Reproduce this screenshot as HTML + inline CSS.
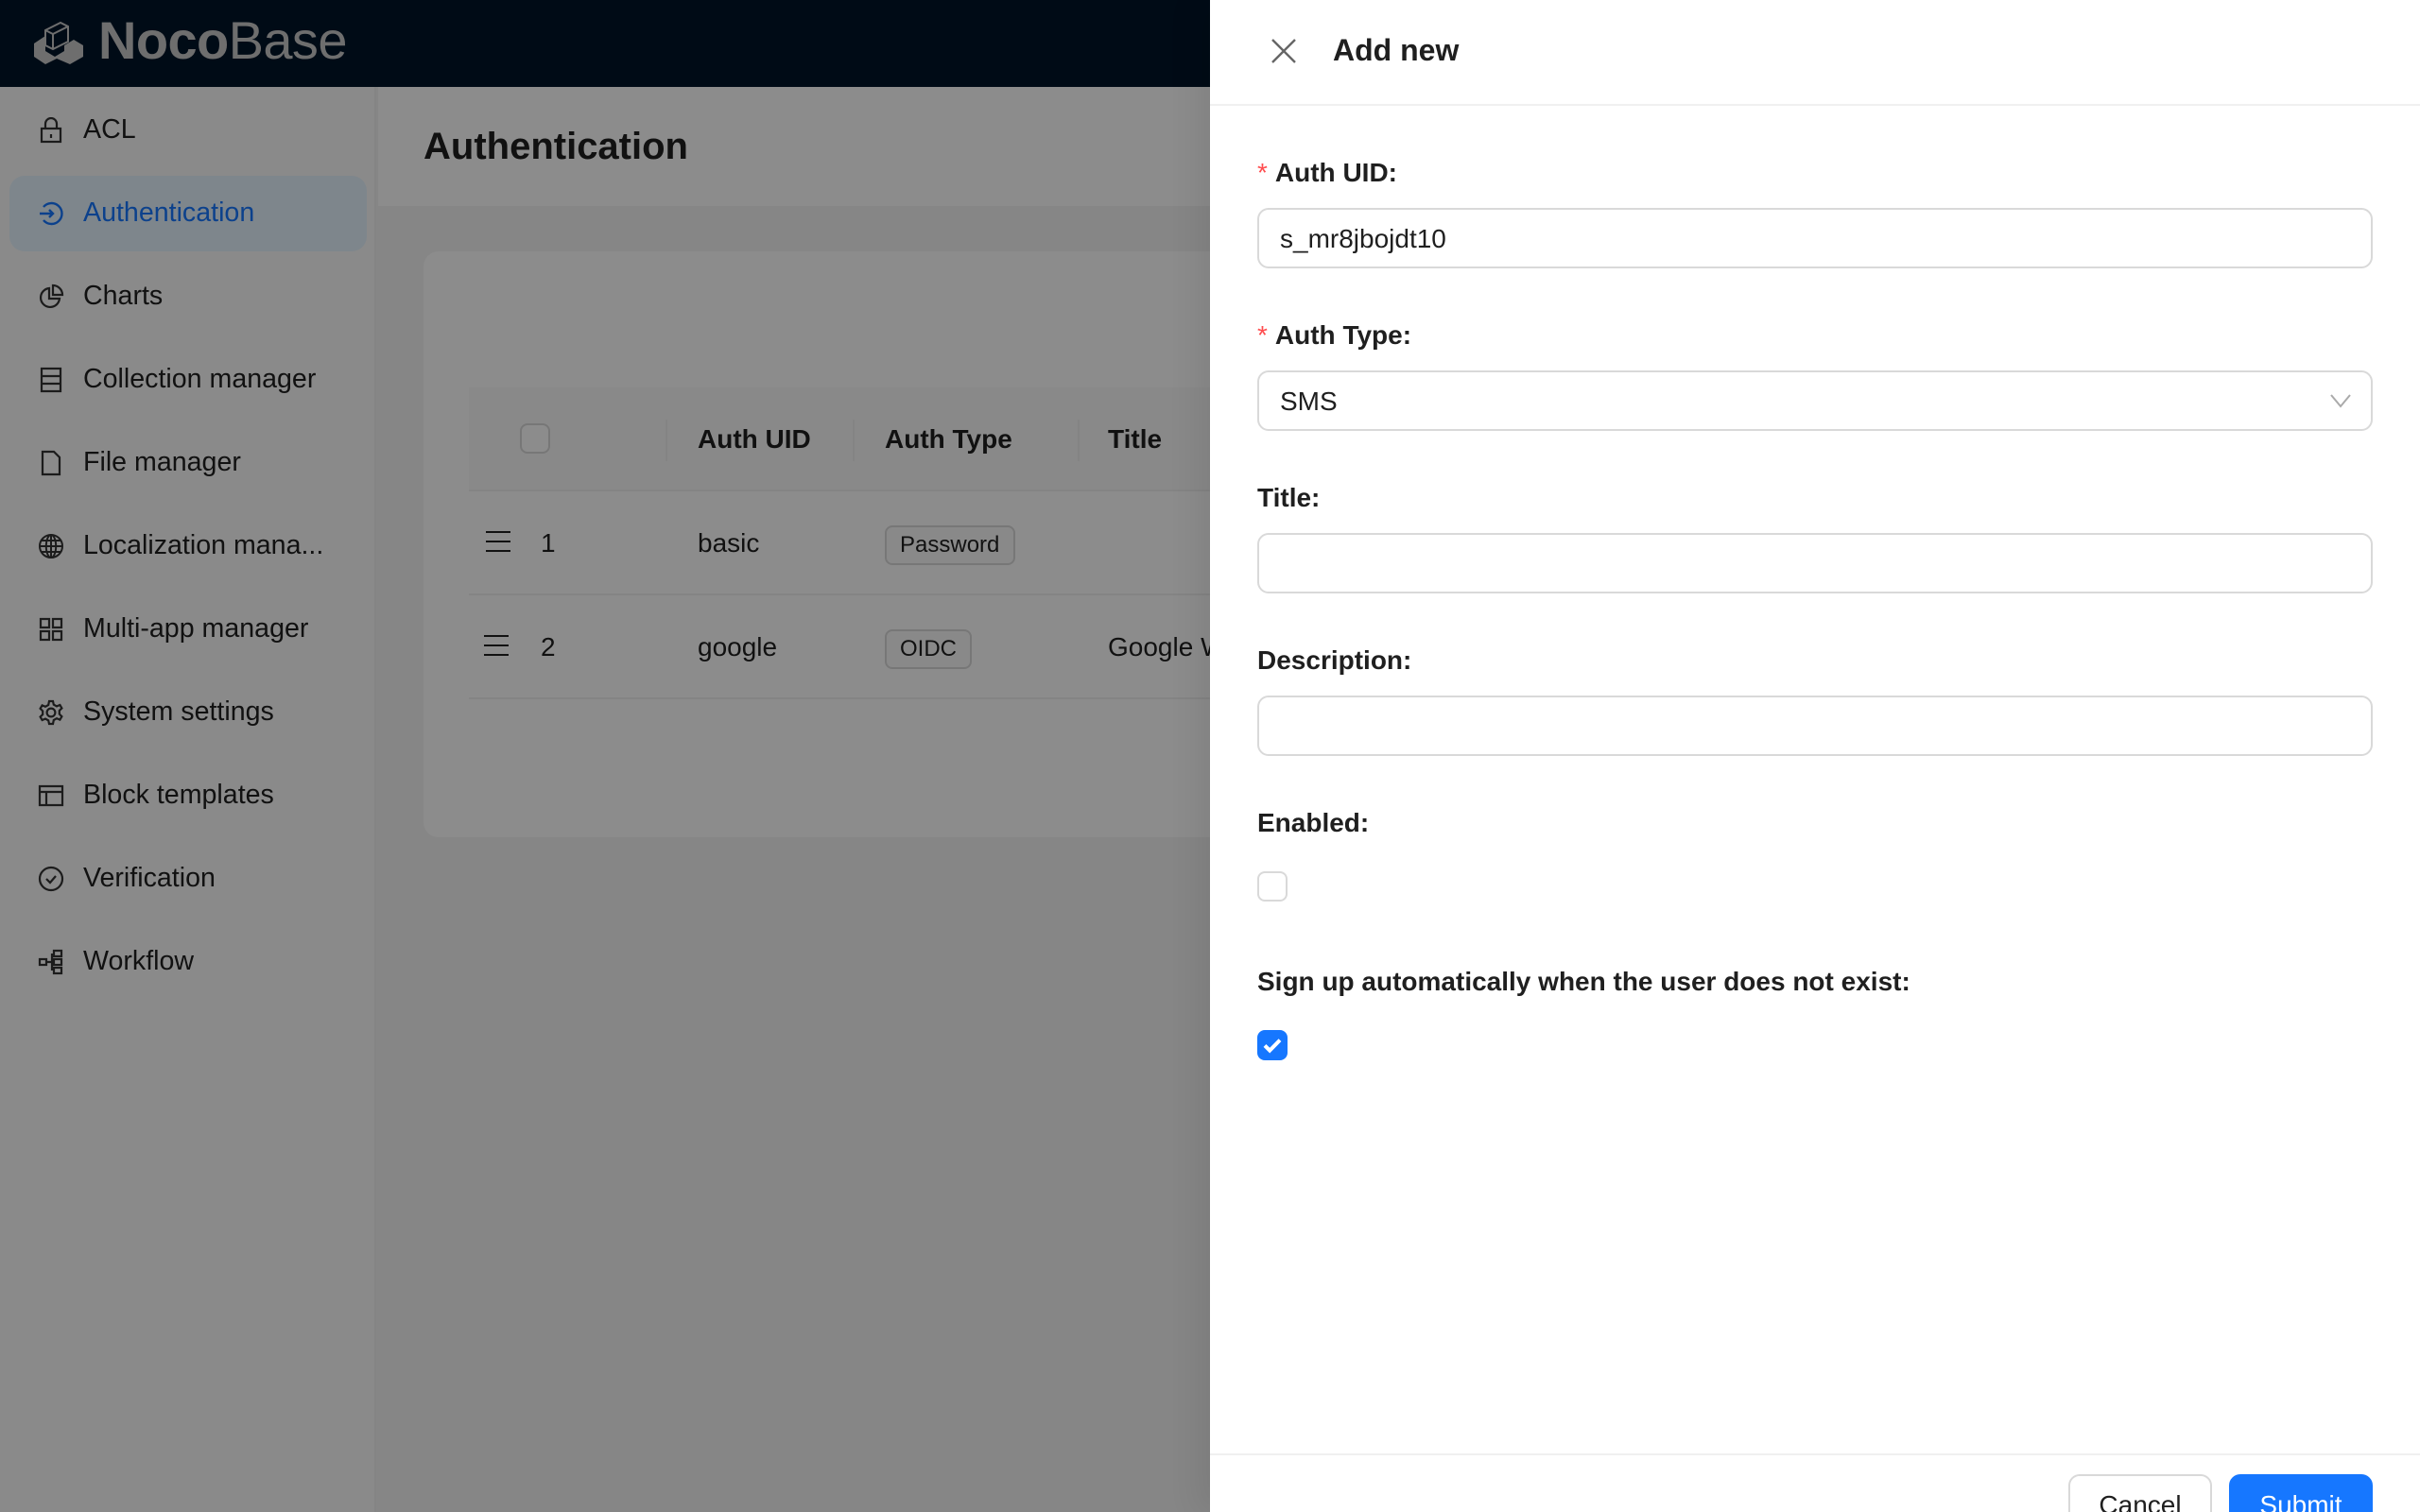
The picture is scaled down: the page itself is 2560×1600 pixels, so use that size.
<!DOCTYPE html>
<html><head><meta charset="utf-8">
<style>
*{box-sizing:border-box;margin:0;padding:0}
html,body{width:2560px;height:1600px;overflow:hidden;background:#f5f5f5}
#w{width:1280px;height:800px;transform:scale(2);transform-origin:0 0;position:relative;font-family:"Liberation Sans",Arial,sans-serif;font-size:14px;color:rgba(0,0,0,0.88);background:#f5f5f5;overflow:hidden}
.abs{position:absolute}
.hdr{left:0;top:0;width:1280px;height:46px;background:#001529}
.side{left:0;top:46px;width:199px;height:754px;background:#fbfbfb;border-right:1px solid #f0f0f0}
.mi{position:absolute;left:5px;width:189px;height:40px;border-radius:8px;display:flex;align-items:center;padding-left:15px;font-size:14.3px}
.mi svg{width:14px;height:14px;margin-right:10px;flex:none}
.mi.sel{background:#e6f4ff;color:#1677ff}
.ph{left:200px;top:46px;width:1080px;height:63px;background:#fff}
.card{left:224px;top:133px;width:600px;height:310px;background:#fff;border-radius:8px}
.th{left:248px;top:205px;width:500px;height:55px;background:#fafafa;border-bottom:1px solid #f0f0f0}
.row{left:248px;width:500px;height:55px;border-bottom:1px solid #f0f0f0}
.sep{width:1px;height:22px;background:#f0f0f0;top:17px}
.cb{width:16px;height:16px;border:1px solid #d9d9d9;border-radius:4px;background:#fff}
.tag{position:absolute;border:1px solid #d9d9d9;background:#fafafa;border-radius:4px;font-size:12px;height:21px;line-height:19px;padding:0 7px}
.mask{left:0;top:0;width:640px;height:800px;background:rgba(0,0,0,0.45)}
.dr{left:640px;top:0;width:640px;height:800px;background:#fff;box-shadow:-6px 0 16px rgba(0,0,0,0.08)}
.lbl{position:absolute;left:25px;font-weight:bold;font-size:14px}
.lbl .r{color:#ff4d4f;font-weight:normal;margin-right:4px;font-family:SimSun,"Liberation Sans",sans-serif}
.inp{position:absolute;left:25px;width:590px;height:32px;border:1px solid #d9d9d9;border-radius:6px;padding:0 11px;line-height:30px}
.btn{position:absolute;top:780px;height:32px;border-radius:6px;line-height:30px;text-align:center;font-size:14px}
</style></head><body><div id="w">
<div class="abs hdr">
<svg class="abs" style="left:15px;top:9px" width="30" height="26" viewBox="0 0 30 26"><path d="M3 14 L9 10 L9 18 L14 21 L19 18 L19 15 L24 12 L29 15 L29 21 L22 25 L15 22 L9 25 L3 21Z" fill="#c8c8c8"/><path d="M9 7 L17 3 L21 5 L21 13 L13 17 L9 15Z" fill="none" stroke="#c8c8c8" stroke-width="1"/><path d="M9 7 L13 9 L21 5 M13 9 L13 17" stroke="#c8c8c8" stroke-width="1" fill="none"/></svg>
<div class="abs" style="left:52px;top:6px;font-size:28px;color:#c8c8c8;letter-spacing:-0.3px"><b>Noco</b><span style="font-weight:300">Base</span></div>
</div>
<div class="abs side">
<div class="mi" style="top:3px"><svg viewBox="0 0 14 14" fill="none" stroke="#333" stroke-width="1.1"><rect x="2" y="6" width="10" height="7"/><path d="M4 6V3.5a3 3 0 0 1 6 0V6"/><path d="M7 9v2"/></svg>ACL</div>
<div class="mi sel" style="top:47px"><svg viewBox="0 0 14 14" fill="none" stroke="#1677ff" stroke-width="1.2"><path d="M3 3.5A5.5 5.5 0 1 1 3 10.5"/><path d="M1 7h7M6 5l2 2-2 2"/></svg>Authentication</div>
<div class="mi" style="top:91px"><svg viewBox="0 0 14 14" fill="none" stroke="#333" stroke-width="1.1"><path d="M6 2.5A5 5 0 1 0 11.5 8H6Z"/><path d="M8 1v5h5A5 5 0 0 0 8 1Z"/></svg>Charts</div>
<div class="mi" style="top:135px"><svg viewBox="0 0 14 14" fill="none" stroke="#333" stroke-width="1.1"><rect x="2" y="1" width="10" height="12"/><path d="M2 5h10M2 9h10"/></svg>Collection manager</div>
<div class="mi" style="top:179px"><svg viewBox="0 0 14 14" fill="none" stroke="#333" stroke-width="1.1"><path d="M2.5 1h6l3 3v9h-9Z"/></svg>File manager</div>
<div class="mi" style="top:223px"><svg viewBox="0 0 14 14" fill="none" stroke="#333" stroke-width="1"><circle cx="7" cy="7" r="6"/><ellipse cx="7" cy="7" rx="2.6" ry="6"/><path d="M1 7h12M2 4h10M2 10h10M7 1v12"/></svg>Localization mana...</div>
<div class="mi" style="top:267px"><svg viewBox="0 0 14 14" fill="none" stroke="#333" stroke-width="1.1"><rect x="1.5" y="1.5" width="4.5" height="4.5"/><rect x="8" y="1.5" width="4.5" height="4.5"/><rect x="1.5" y="8" width="4.5" height="4.5"/><rect x="8" y="8" width="4.5" height="4.5"/></svg>Multi-app manager</div>
<div class="mi" style="top:311px"><svg viewBox="0 0 14 14" fill="none" stroke="#333" stroke-width="1.1"><circle cx="7" cy="7" r="2.2"/><path d="M6 1h2l.4 1.8 1.6.9 1.7-.7 1 1.7-1.3 1.3v1.8l1.3 1.3-1 1.7-1.7-.7-1.6.9L8 13H6l-.4-1.8-1.6-.9-1.7.7-1-1.7 1.3-1.3V6.2L1.3 4.9l1-1.7 1.7.7 1.6-.9Z"/></svg>System settings</div>
<div class="mi" style="top:355px"><svg viewBox="0 0 14 14" fill="none" stroke="#333" stroke-width="1.1"><rect x="1" y="2" width="12" height="10"/><path d="M1 5h12M4.5 5v7"/></svg>Block templates</div>
<div class="mi" style="top:399px"><svg viewBox="0 0 14 14" fill="none" stroke="#333" stroke-width="1.1"><circle cx="7" cy="7" r="6"/><path d="M4.5 7l2 2 3-3.5"/></svg>Verification</div>
<div class="mi" style="top:443px"><svg viewBox="0 0 14 14" fill="none" stroke="#333" stroke-width="1.1"><rect x="1" y="5.5" width="3.5" height="3"/><path d="M4.5 7h3M7.5 2.5v9"/><rect x="8.5" y="1" width="4" height="3"/><rect x="8.5" y="5.5" width="4" height="3"/><rect x="8.5" y="10" width="4" height="3"/></svg>Workflow</div>
</div>
<div class="abs ph"><div class="abs" style="left:24px;top:21px;font-size:20px;font-weight:bold">Authentication</div></div>
<div class="abs card"></div>
<div class="abs th">
<div class="abs cb" style="left:27px;top:19px"></div>
<div class="abs sep" style="left:104px"></div>
<div class="abs sep" style="left:203px"></div>
<div class="abs sep" style="left:322px"></div>
<div class="abs" style="left:121px;top:19px;font-weight:bold">Auth UID</div>
<div class="abs" style="left:220px;top:19px;font-weight:bold">Auth Type</div>
<div class="abs" style="left:338px;top:19px;font-weight:bold">Title</div>
</div>
<div class="abs row" style="top:260px">
<div class="abs" style="left:9px;top:21px;width:13px;height:11px;border-top:1.5px solid #222;border-bottom:1.5px solid #222"><div style="margin-top:3.5px;height:1.5px;background:#222"></div></div>
<div class="abs" style="left:38px;top:19px">1</div>
<div class="abs" style="left:121px;top:19px">basic</div>
<div class="tag" style="left:220px;top:18px">Password</div>
</div>
<div class="abs row" style="top:315px">
<div class="abs" style="left:8px;top:21px;width:13px;height:11px;border-top:1.5px solid #222;border-bottom:1.5px solid #222"><div style="margin-top:3.5px;height:1.5px;background:#222"></div></div>
<div class="abs" style="left:38px;top:19px">2</div>
<div class="abs" style="left:121px;top:19px">google</div>
<div class="tag" style="left:220px;top:18px">OIDC</div>
<div class="abs" style="left:338px;top:19px">Google Workspace</div>
</div>
<div class="abs mask"></div>
<div class="abs dr">
<div class="abs" style="left:0;top:0;width:640px;height:56px;border-bottom:1px solid #f0f0f0"></div>
<svg class="abs" style="left:32px;top:20px" width="14" height="14" viewBox="0 0 14 14"><path d="M1 1L13 13M13 1L1 13" stroke="#666" stroke-width="1.2"/></svg>
<div class="abs" style="left:65px;top:19px;font-size:16px;font-weight:bold">Add new</div>
<div class="lbl" style="top:83px"><span class="r">*</span>Auth UID:</div>
<div class="inp" style="top:110px">s_mr8jbojdt10</div>
<div class="lbl" style="top:169px"><span class="r">*</span>Auth Type:</div>
<div class="inp" style="top:196px">SMS<svg class="abs" style="right:10px;top:11px" width="12" height="8" viewBox="0 0 12 8"><path d="M1 1l5 6 5-6" fill="none" stroke="#aaa" stroke-width="1"/></svg></div>
<div class="lbl" style="top:255px">Title:</div>
<div class="inp" style="top:282px"></div>
<div class="lbl" style="top:341px">Description:</div>
<div class="inp" style="top:368px"></div>
<div class="lbl" style="top:427px">Enabled:</div>
<div class="abs cb" style="left:25px;top:461px"></div>
<div class="lbl" style="top:511px">Sign up automatically when the user does not exist:</div>
<div class="abs" style="left:25px;top:545px;width:16px;height:16px;border-radius:4px;background:#1677ff"><svg width="16" height="16" viewBox="0 0 16 16"><path d="M4 8.2l2.6 2.6L12 5.3" fill="none" stroke="#fff" stroke-width="2"/></svg></div>
<div class="abs" style="left:0;top:769px;width:640px;height:1px;background:#f0f0f0"></div>
<div class="btn" style="left:454px;width:76px;border:1px solid #d9d9d9;background:#fff">Cancel</div>
<div class="btn" style="left:539px;width:76px;background:#1677ff;color:#fff;border:1px solid #1677ff">Submit</div>
</div>
</div></body></html>
